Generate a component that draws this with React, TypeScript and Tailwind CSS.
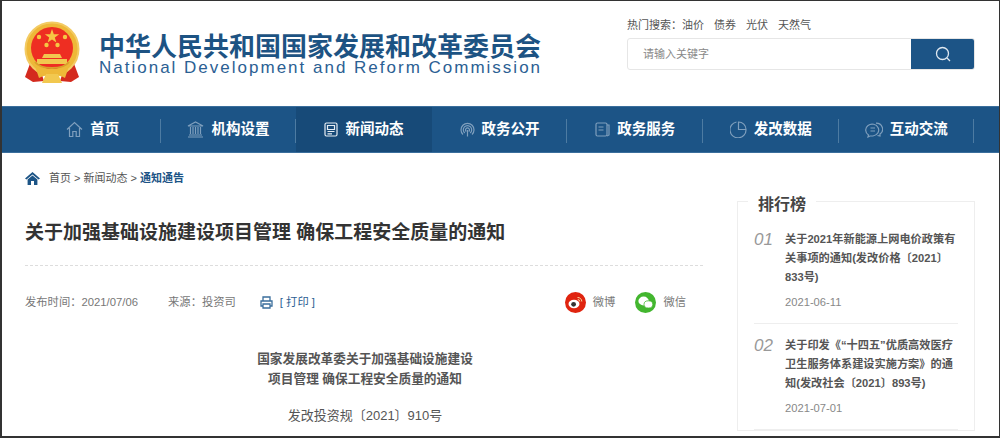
import type { ReactNode } from "react";

const cjk = "font-['Liberation_Sans','Noto_Sans_CJK_SC',sans-serif]";

function Emblem() {
  return (
    <svg width="56" height="64" viewBox="0 0 56 64">
      <path d="M7 40 L1 56 L9 61 L20 60 L14 42 Z" fill="#d42a1e" />
      <path d="M49 40 L55 56 L47 61 L36 60 L42 42 Z" fill="#d42a1e" />
      <circle cx="28" cy="28" r="26.5" fill="#eeb838" stroke="#f3cb63" strokeWidth="2" />
      <circle cx="28" cy="27" r="21" fill="#ee2e22" />
      <polygon points="28,8 29.8,13.2 35.2,13.2 30.8,16.4 32.4,21.6 28,18.4 23.6,21.6 25.2,16.4 20.8,13.2 26.2,13.2" fill="#f6c744" />
      <circle cx="15" cy="16" r="2.2" fill="#f6c744" />
      <circle cx="41" cy="16" r="2.2" fill="#f6c744" />
      <circle cx="22.5" cy="24" r="2.2" fill="#f6c744" />
      <circle cx="33.5" cy="24" r="2.2" fill="#f6c744" />
      <path d="M20 33 H36 L38 37 H18 Z M13 38 H43 V43 H13 Z" fill="#f2c84f" />
      <path d="M11 45 C19 52 37 52 45 45 L41 57 C35 53 21 53 15 57 Z" fill="#eeb838" />
      <path d="M22 53 H34 L38 62 H18 Z" fill="#f2c84f" />
      <path d="M11 41 C17 49 39 49 45 41" fill="none" stroke="#d9a02b" strokeWidth="2" />
    </svg>
  );
}

function NavItem({ label, icon, active, last }: { label: string; icon: ReactNode; active?: boolean; last?: boolean }) {
  return (
    <div className={`relative flex w-[135.6px] h-full items-center justify-center gap-[7px] ${active ? "bg-[#174a78]" : ""}`}>
      <span className={active ? "text-[#e6edf3]" : "text-[#7f9fbd]"}>{icon}</span>
      <span className="mt-[1px] text-[14.5px] font-bold text-white">{label}</span>
      {(last || !active) && <span className="absolute right-0 top-[12px] h-[24px] w-px bg-[#4d7ba2]" />}
    </div>
  );
}

const stroke = { fill: "none", stroke: "currentColor", strokeWidth: 1.2 };

const navItems: { label: string; active?: boolean; icon: ReactNode }[] = [
  {
    label: "首页",
    icon: (
      <svg width="17" height="17" viewBox="0 0 17 17" {...stroke}>
        <path d="M1 8.5 L8.5 1.5 L16 8.5 M3.5 7 V15.5 H6.8 V10.5 H10.2 V15.5 H13.5 V7" />
      </svg>
    ),
  },
  {
    label: "机构设置",
    icon: (
      <svg width="17" height="17" viewBox="0 0 17 17" {...stroke}>
        <path d="M1 5 L8.5 1 L16 5 Z M1 16 H16 M2 14 H15 M3.5 6 V13 M6 6 V13 M8.5 6 V13 M11 6 V13 M13.5 6 V13" />
      </svg>
    ),
  },
  {
    label: "新闻动态",
    active: true,
    icon: (
      <svg width="14" height="15" viewBox="0 0 14 15" {...stroke}>
        <rect x="1" y="1" width="12" height="13" rx="1.5" />
        <path d="M3.5 3.5 H10.5 V7.5 H3.5 Z M3.5 9.5 H10.5 M3.5 11.8 H8" />
      </svg>
    ),
  },
  {
    label: "政务公开",
    icon: (
      <svg width="15" height="15" viewBox="0 0 15 15" {...stroke}>
        <path d="M3 12.5 A6.5 6.5 0 1 1 12 12.5 M4.8 11 A4.2 4.2 0 1 1 10.2 11 M6.3 9.5 A2 2 0 1 1 8.7 9.5 M7.5 8 V14.5" />
      </svg>
    ),
  },
  {
    label: "政务服务",
    icon: (
      <svg width="15" height="15" viewBox="0 0 15 15" {...stroke}>
        <rect x="1" y="1" width="11" height="13" rx="1.5" />
        <path d="M3.5 5 H8.5 M3.5 8 H8.5 M12 3 H14 V13 L12 14" />
      </svg>
    ),
  },
  {
    label: "发改数据",
    icon: (
      <svg width="17" height="17" viewBox="0 0 17 17" {...stroke}>
        <path d="M6.5 1 A8 8 0 1 0 16 8.5 M8.5 1 V8.5 H16 A7.5 7.5 0 0 0 8.5 1 Z" />
      </svg>
    ),
  },
  {
    label: "互动交流",
    icon: (
      <svg width="18" height="16" viewBox="0 0 18 16" {...stroke}>
        <path d="M3.5 13 A6.5 6 0 1 1 8 14 H5 L3 15 Z M5.5 6 H10 M5.5 9 H10 M11 1.2 A6.5 6 0 0 1 15 12 L15 14 L12.5 13.5" />
      </svg>
    ),
  },
];

function RankItem({ no, date, children }: { no: string; date: string; children: ReactNode }) {
  return (
    <div className="flex border-b border-[#eeeeee] pt-[12px] pb-[11px] ml-[16px] mr-[16px] w-[204px]">
      <span className="w-[31px] shrink-0 font-['Liberation_Sans',sans-serif] text-[17px] italic leading-[20px] text-[#999999]">{no}</span>
      <div className="min-w-0">
        <p className="text-[11.2px] font-bold leading-[19px] text-[#555555]">{children}</p>
        <p className="mt-[6px] text-[11.2px] leading-[19px] text-[#888888]">{date}</p>
      </div>
    </div>
  );
}

export default function App() {
  return (
    <div className={`h-[438px] w-[1000px] overflow-hidden border border-b-2 border-l-2 border-[#333333] bg-white ${cjk}`}>
      <header className="flex h-[105px] items-start pl-[22px] pr-[24px]">
        <div className="mt-[20px]">
          <Emblem />
        </div>
        <div className="ml-[19px] mt-[34px] w-[448px]">
          <div className="text-[26px] font-bold leading-[24px] text-[#1d5383] whitespace-nowrap">中华人民共和国国家发展和改革委员会</div>
          <div className="mt-[1px] text-[17px] leading-[16px] tracking-[2px] text-[#2b6093] whitespace-nowrap">National Development and Reform Commission</div>
        </div>
        <div className="ml-auto mt-[17px] w-[348px]">
          <div className="flex h-[14px] items-center text-[11px] text-[#555555]">
            <span>热门搜索：</span>
            <span>油价</span>
            <span className="ml-[10px]">债券</span>
            <span className="ml-[10px]">光伏</span>
            <span className="ml-[10px]">天然气</span>
          </div>
          <div className="mt-[6px] flex h-[32px] overflow-hidden rounded-[3px] border border-[#e6e6e6]">
            <div className="flex flex-1 items-center pl-[15px] text-[11px] text-[#888888]">请输入关键字</div>
            <div className="flex w-[63px] items-center justify-center bg-[#1c5486]">
              <svg width="16" height="16" viewBox="0 0 16 16" fill="none" stroke="#dfe8f0" strokeWidth="1.3">
                <circle cx="7.5" cy="7.5" r="6" />
                <path d="M12 12 L15 15" />
              </svg>
            </div>
          </div>
        </div>
      </header>

      <nav className="flex h-[47px] items-center border-y border-[#3a6e9c] bg-[#1c5486] pl-[23px]">
        {navItems.map((item, i) => (
          <NavItem key={item.label} label={item.label} icon={item.icon} active={item.active} last={i === navItems.length - 1} />
        ))}
      </nav>

      <div className="flex pl-[23px]">
        <main className="w-[678px]">
          <div className="flex h-[48px] items-center pt-[2px] text-[11px] text-[#555555]">
            <svg width="15" height="13" viewBox="0 0 15 13" fill="#1c5486" className="mr-[9px]">
              <path d="M7.5 0 L15 6.5 L13.5 7.5 L7.5 2.4 L1.5 7.5 L0 6.5 Z M2.6 7.6 L7.5 3.5 L12.4 7.6 V13 H9 V9 H6 V13 H2.6 Z" />
            </svg>
            <span>首页 &gt; 新闻动态 &gt; </span>
            <span className="ml-[3px] font-bold text-[#1c5486]">通知通告</span>
          </div>
          <h1 className="mt-[19px] text-[19px] font-bold leading-[26px] text-[#333333]">关于加强基础设施建设项目管理 确保工程安全质量的通知</h1>
          <div className="mt-[19px] border-b border-dashed border-[#dddddd]" />
          <div className="mt-[24px] flex h-[24px] items-center text-[11.3px] text-[#777777]">
            <span>发布时间：2021/07/06</span>
            <span className="ml-[30px]">来源：投资司</span>
            <svg width="13" height="13" viewBox="0 0 13 13" fill="none" stroke="#3a6e9c" strokeWidth="1.3" className="ml-[24px]">
              <path d="M3 5 V1 H10 V5 M3 10 H1 V5 H12 V10 H10 M3 8 H10 V12 H3 Z" />
            </svg>
            <span className="ml-[7px] text-[#2b6093]">[ 打印 ]</span>
            <span className="ml-auto flex h-[21px] w-[21px] items-center justify-center rounded-full bg-[#e0240f]">
              <svg width="15" height="13" viewBox="0 0 15 13">
                <ellipse cx="6" cy="8" rx="5.5" ry="4.2" fill="#fff" />
                <circle cx="5.6" cy="8.3" r="2.4" fill="#333" />
                <path d="M9.5 1.5 A4 4 0 0 1 13.8 5.5 M9.8 3.6 A2 2 0 0 1 11.8 5.5" fill="none" stroke="#f7d9a0" strokeWidth="1" />
              </svg>
            </span>
            <span className="ml-[7px]">微博</span>
            <span className="ml-[20px] flex h-[21px] w-[21px] items-center justify-center rounded-full bg-[#43b62f]">
              <svg width="15" height="13" viewBox="0 0 15 13" fill="#fff">
                <ellipse cx="5.6" cy="5" rx="5.2" ry="4.4" />
                <ellipse cx="10.4" cy="8.4" rx="4.4" ry="3.6" stroke="#43b62f" strokeWidth="0.8" />
              </svg>
            </span>
            <span className="ml-[7px] mr-[17px]">微信</span>
          </div>
          <div className="mt-[35px] pl-[2px] text-center text-[12.7px] leading-[20px] text-[#555555]">
            <p className="font-bold">国家发展改革委关于加强基础设施建设</p>
            <p className="font-bold">项目管理 确保工程安全质量的通知</p>
            <p className="mt-[17px] text-[13px]">发改投资规〔2021〕910号</p>
          </div>
        </main>

        <aside className="ml-[34px] mt-[48px] w-[238px]">
          <div className="relative border border-[#eeeeee] pt-[16px]">
            <h2 className="absolute left-[10px] top-[-10px] bg-white px-[10px] text-[16px] font-bold leading-[26px] text-[#444444]">排行榜</h2>
            <RankItem no="01" date="2021-06-11">关于2021年新能源上网电价政策有关事项的通知(发改价格〔2021〕833号)</RankItem>
            <RankItem no="02" date="2021-07-01">关于印发《“十四五”优质高效医疗卫生服务体系建设实施方案》的通知(发改社会〔2021〕893号)</RankItem>
          </div>
        </aside>
      </div>
    </div>
  );
}
